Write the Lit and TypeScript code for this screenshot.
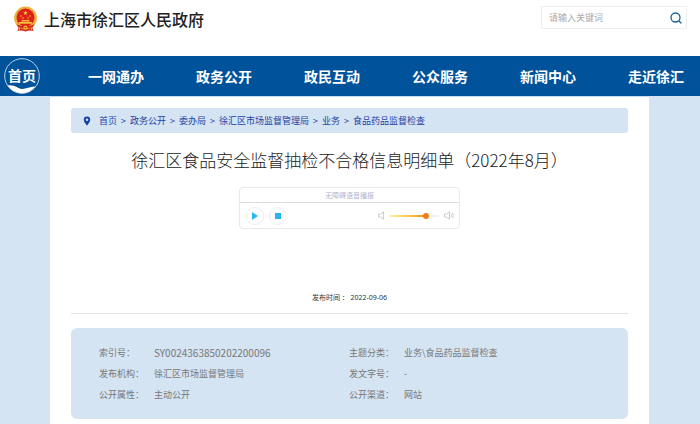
import { LitElement, html, svg, css } from "lit";
import { customElement, state } from "lit/decorators.js";

const NAV = ["一网通办", "政务公开", "政民互动", "公众服务", "新闻中心", "走近徐汇"];
const CRUMBS = ["首页", "政务公开", "委办局", "徐汇区市场监督管理局", "业务", "食品药品监督检查"];
const INFO = [
  { label: "索引号：", value: "SY0024363850202200096", code: true },
  { label: "主题分类：", value: "业务\\食品药品监督检查" },
  { label: "发布机构：", value: "徐汇区市场监督管理局" },
  { label: "发文字号：", value: "-" },
  { label: "公开属性：", value: "主动公开" },
  { label: "公开渠道：", value: "网站" },
];

const star = (x: number, y: number, r: number) => {
  const pts = Array.from({ length: 10 }, (_, i) => {
    const a = (Math.PI / 5) * i - Math.PI / 2;
    const d = i % 2 ? r * 0.4 : r;
    return `${(x + d * Math.cos(a)).toFixed(2)},${(y + d * Math.sin(a)).toFixed(2)}`;
  });
  return svg`<polygon points=${pts.join(" ")} fill="#ffd948"></polygon>`;
};

@customElement("app-root")
export class AppRoot extends LitElement {
  @state() private volume = 78;

  static styles = css`
    :host {
      display: block;
      min-height: 100vh;
      background: #d5e4f3;
      color: #333;
      font-family: "Noto Sans CJK SC", sans-serif;
      font-size: 9px;
      line-height: 14px;
      overflow-x: hidden;
    }
    :host, .page { box-sizing: border-box; }
    .page { min-height: 100vh; display: flex; flex-direction: column; }
    a { color: inherit; text-decoration: none; }
    button { border: 0; padding: 0; background: none; cursor: pointer; }
    svg { display: block; }
    .top {
      display: flex;
      justify-content: space-between;
      align-items: flex-start;
      height: 50px;
      padding: 6px 13px 0;
      background: #fff;
    }
    .brand { display: flex; align-items: center; gap: 6px; }
    .brand-name { font-size: 16px; line-height: 26px; font-weight: 500; color: #222; }
    .search { display: flex; border: 1px solid #eee; width: 144px; height: 21px; }
    .search-input {
      flex: 1;
      min-width: 0;
      border: 0;
      padding: 0 0 0 7px;
      outline: 0;
      background: none;
      font: inherit;
      color: #333;
    }
    .search-input::placeholder { color: #aaa; opacity: 1; }
    .search-btn { width: 20px; display: grid; place-items: center; }
    .nav {
      display: flex;
      align-items: center;
      height: 40px;
      overflow: hidden;
      background: #00529b;
      color: #fff;
      font-weight: 700;
      font-size: 14px;
      line-height: 40px;
    }
    .home {
      flex: none;
      display: grid;
      place-items: center;
      width: 36px;
      height: 36px;
      margin: 0 22px 0 4px;
    }
    .home > * { grid-area: 1 / 1; }
    .home-text { line-height: 34px; padding-bottom: 2px; }
    .nav-item { flex: 1 0 108px; text-align: center; }
    .main {
      flex: 1;
      margin: 0 51px 0 50px;
      padding: 11px 21px 5px;
      border-top: 1px solid #c3dcf5;
      background: #fff;
    }
    .crumbs {
      display: flex;
      align-items: center;
      gap: 4px;
      height: 25px;
      padding: 0 12px;
      border-radius: 3px;
      background: #d5e4f3;
      color: #1c41a5;
    }
    .pin { margin-right: 4px; }
    .title {
      margin: 15px 0;
      font-size: 17px;
      line-height: 24px;
      font-weight: 300;
      text-align: center;
      color: #222;
    }
    .player {
      box-sizing: border-box;
      width: 221px;
      height: 42px;
      margin: 0 auto;
      border: 1px solid #e9e9e9;
      border-radius: 4px;
    }
    .player-head {
      border-bottom: 1px solid #d9dce6;
      font-size: 7px;
      color: #b0b4d0;
      text-align: center;
    }
    .controls { display: flex; align-items: center; height: 25px; padding: 0 5px 0 6px; gap: 5px; }
    .round {
      display: grid;
      place-items: center;
      width: 18px;
      height: 18px;
      border: 1px solid #eee;
      border-radius: 50%;
    }
    .low { margin-left: auto; }
    .slider {
      appearance: none;
      width: 50px;
      height: 11px;
      margin: 0;
      background: none;
    }
    .slider::-webkit-slider-runnable-track {
      height: 2px;
      background: linear-gradient(90deg, #fff3a8, #ffc83c 40%, #ee7d1b 78%, #eee 78%);
    }
    .slider::-webkit-slider-thumb {
      appearance: none;
      width: 6px;
      height: 6px;
      margin-top: -2px;
      border-radius: 50%;
      background: #ee7d1b;
    }
    .date {
      margin: 62px 0 0;
      padding-bottom: 8px;
      border-bottom: 1px solid #e2e2e2;
      font-family: "Noto Sans", "Noto Sans CJK SC", sans-serif;
      font-size: 7px;
      text-align: center;
    }
    .info {
      display: grid;
      grid-template-columns: 250px 1fr;
      margin: 14px 0 0;
      padding: 14px 28px;
      border-radius: 6px;
      background: #d5e4f3;
      color: #777;
      line-height: 21px;
    }
    .row { display: grid; grid-template-columns: 55px 1fr; }
    .row dd { margin: 0; }
    .row .code { font-size: 10px; }
  `;

  private emblem() {
    return html`<svg width="25" height="26" viewBox="0 0 25 26" aria-hidden="true">
      <path d="M6 20 L4.500 25 L9 24.500 L12.500 25.500 L16 24.500 L20.500 25 L19 20Z" fill="#d9281b" />
      <circle cx="12.500" cy="12" r="11.400" fill="#edb13c" />
      <circle cx="12.500" cy="11.500" r="9" fill="#dc2118" />
      ${star(12.5, 7, 2.4)}${star(8, 10, 1.1)}${star(10, 12, 1.1)}${star(15, 12, 1.1)}${star(17, 10, 1.1)}
      <path d="M9 14h7l1 1.500H8zM6 16h13v1.800H6z" fill="#f4bd3c" />
      <path d="M3.500 18.500 Q12.500 22 21.500 18.500 L20 21 Q12.500 24 5 21Z" fill="#d9281b" />
      <circle cx="12.500" cy="21.500" r="2" fill="#f2b73d" />
      <circle cx="12.500" cy="21.500" r=".8" fill="#d9281b" />
      <path d="M7 21.500 L6 25M18 21.500 L19 25" stroke="#f2b73d" stroke-width="1" />
    </svg>`;
  }

  render() {
    return html`<div class="page">
      <header class="top">
        <a class="brand" href="#">${this.emblem()}<span class="brand-name">上海市徐汇区人民政府</span></a>
        <form class="search" @submit=${(e: Event) => e.preventDefault()}>
          <input class="search-input" type="text" placeholder="请输入关键词" aria-label="请输入关键词" />
          <button class="search-btn" aria-label="搜索">
            <svg width="12" height="12" viewBox="0 0 12 12" fill="none" stroke="#185f9c" stroke-width="1.300" stroke-linecap="round">
              <circle cx="5.500" cy="5.500" r="4.500" /><path d="M9 9l2 2" />
            </svg>
          </button>
        </form>
      </header>
      <nav class="nav">
        <a class="home" href="#">
          <svg width="36" height="36" viewBox="0 0 36 36" aria-hidden="true">
            <circle cx="18" cy="18" r="17.300" fill="none" stroke="#b9d2e8" stroke-width="1" />
            <path d="M3.500 27.500 C8 27 11 28 14.500 30 C20 32.500 23 29 31.500 28.500 A17.300 17.300 0 0 1 3.500 27.500Z" fill="#fff" />
          </svg>
          <span class="home-text">首页</span>
        </a>
        ${NAV.map((n) => html`<a class="nav-item" href="#">${n}</a>`)}
      </nav>
      <main class="main">
        <nav class="crumbs">
          <svg class="pin" width="8" height="10" viewBox="0 0 8 10" aria-hidden="true">
            <path fill="#1440a0" fill-rule="evenodd" d="M4 .5A3.200 3.200 0 0 0 .8 3.700C.8 6 4 9.500 4 9.500S7.200 6 7.200 3.700A3.200 3.200 0 0 0 4 .5ZM4 2.400a1.300 1.300 0 1 1 0 2.600a1.300 1.300 0 0 1 0-2.600Z" />
          </svg>
          ${CRUMBS.map((c, i) => html`${i ? html`<span>&gt;</span>` : ""}<a href="#">${c}</a>`)}
        </nav>
        <h1 class="title">徐汇区食品安全监督抽检不合格信息明细单（2022年8月）</h1>
        <section class="player" aria-label="无障碍语音播报">
          <div class="player-head">无障碍语音播报</div>
          <div class="controls">
            <button class="round" aria-label="播放">
              <svg width="8" height="8" viewBox="0 0 8 8"><path d="M1 0L7 4L1 8Z" fill="#29b6f0" /></svg>
            </button>
            <button class="round" aria-label="停止">
              <svg width="6" height="6" viewBox="0 0 6 6"><path d="M0 0h6v6H0z" fill="#29b6f0" /></svg>
            </button>
            <svg class="low" width="6" height="9" viewBox="0 0 6 9" fill="none" stroke="#ccc"><path d="M.5 3H2.500L5.500 .8V8.200L2.500 6H.5Z" /></svg>
            <input class="slider" type="range" min="0" max="100" aria-label="音量" .value=${String(this.volume)}
              @input=${(e: Event) => (this.volume = Number((e.target as HTMLInputElement).value))} />
            <svg width="10" height="9" viewBox="0 0 10 9" fill="none" stroke="#ccc"><path d="M.5 3H2.500L5.500 .8V8.200L2.500 6H.5ZM7 3Q8 4.500 7 6M8.500 1.500Q10.500 4.500 8.500 7.500" /></svg>
          </div>
        </section>
        <p class="date">发布时间 ： 2022-09-06</p>
        <dl class="info">
          ${INFO.map((r) => html`<div class="row"><dt>${r.label}</dt><dd class=${r.code ? "code" : ""}>${r.value}</dd></div>`)}
        </dl>
      </main>
    </div>`;
  }
}
